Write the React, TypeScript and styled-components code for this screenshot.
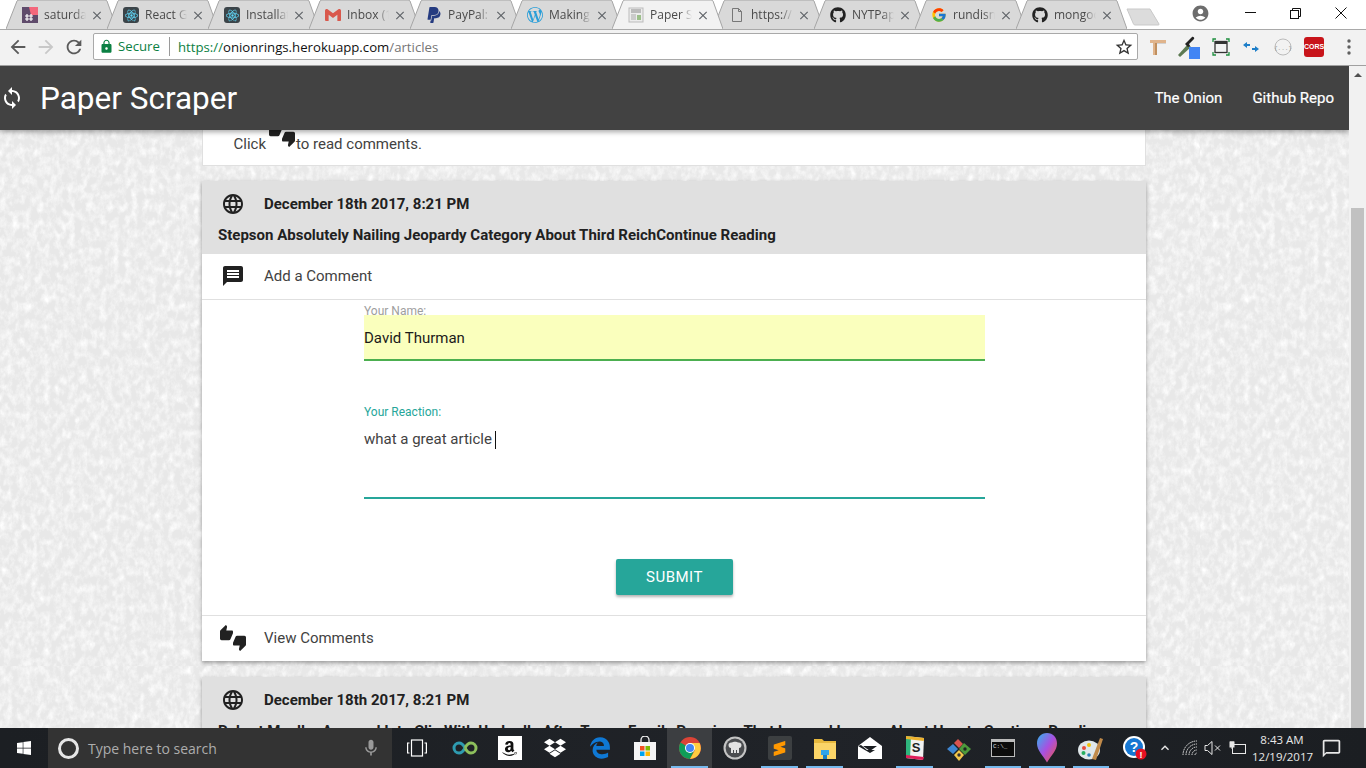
import React from 'react';
import styled, { createGlobalStyle } from 'styled-components';
import { MdLanguage, MdMessage, MdThumbsUpDown, MdSync, MdArrowBack, MdArrowForward, MdRefresh, MdLock, MdStarBorder, MdAccountCircle, MdMic, MdKeyboardArrowUp, MdOutlineChatBubbleOutline, MdClose } from 'react-icons/md';
import { FaGithub, FaWindows, FaAmazon, FaDropbox, FaEdgeLegacy } from 'react-icons/fa';
import { FcGoogle } from 'react-icons/fc';
import { SiGmail, SiPaypal, SiWordpress, SiReact, SiSublimetext } from 'react-icons/si';

const noise = `<svg xmlns='http://www.w3.org/2000/svg' width='600' height='600'><filter id='n'><feTurbulence type='fractalNoise' baseFrequency='0.16 0.11' numOctaves='5' seed='11' stitchTiles='stitch'/><feColorMatrix values='0 0 0 0 1  0 0 0 0 1  0 0 0 0 1  1.2 1.2 0 0 -0.98'/></filter><rect width='600' height='600' fill='#e8e8e8'/><rect width='600' height='600' filter='url(#n)'/></svg>`;
const noiseUrl = `url("data:image/svg+xml,${encodeURIComponent(noise)}")`;

const Global = createGlobalStyle`
  html, body { margin: 0; padding: 0; height: 100%; overflow: hidden; }
  body { font-family: Roboto, "Liberation Sans", sans-serif; color: #212121; }
  * { box-sizing: border-box; }
`;

const Screen = styled.div`
  width: 1366px; height: 768px; display: flex; flex-direction: column; overflow: hidden; background: #fff;
`;
const TabStrip = styled.div`
  height: 29px; flex: none; display: flex; align-items: stretch; padding-left: 6px; background: #fff; position: relative; z-index: 2;
`;
const TabBox = styled.div<{ $active?: boolean }>`
  position: relative; width: 111px; flex: none; margin-right: -10px; padding: 4px 0 0 16px; display: flex; align-items: flex-start;
  z-index: ${p => (p.$active ? 3 : 1)};
`;
const TabShape = styled.svg`
  position: absolute; left: 0; top: 0; width: 111px; height: 29px;
`;
const TabIcon = styled.span`
  position: relative; width: 16px; height: 16px; margin-top: 3px; display: flex; align-items: center; justify-content: center; flex: none; font-size: 16px;
`;
const TabTitle = styled.span`
  position: relative; width: 42px; margin-left: 6px; margin-top: 3px; font: 12px/16px "Open Sans", "Noto Sans", sans-serif; color: #4a4a4a; white-space: nowrap; overflow: hidden;
  -webkit-mask-image: linear-gradient(to right, #000 72%, transparent 100%);
  mask-image: linear-gradient(to right, #000 72%, transparent 100%);
`;
const TabClose = styled.span`
  position: relative; margin-left: 4px; margin-top: 3px; width: 14px; height: 16px; color: #5f6368; font-size: 15px; display: flex; align-items: center; justify-content: center;
`;
const NewTab = styled.svg`
  position: relative; width: 34px; height: 18px; margin: 8px 0 0 9px; flex: none;
`;
const WindowSpacer = styled.div`
  flex: 1; display: flex; justify-content: flex-end; align-items: center; padding: 3px 3px 6px 0;
`;
const Avatar = styled.span`
  color: #6d6d6d; font-size: 19px; display: flex; margin-right: 18px;
`;
const WinButton = styled.span`
  width: 45px; display: flex; justify-content: center; align-items: center; height: 20px; color: #111;
`;
const Toolbar = styled.div`
  height: 37px; flex: none; background: #f2f2f2; border-top: 1px solid #a9a9a9; border-bottom: 1px solid #a0a0a0; display: flex; align-items: center; padding: 0 0 2px 4px; position: relative; z-index: 1;
`;
const NavIcon = styled.span<{ $muted?: boolean; $w?: number }>`
  width: ${p => p.$w ?? 28}px; display: flex; justify-content: center; font-size: 22px; color: ${p => (p.$muted ? '#c8c8c8' : '#5a5a5a')};
`;
const Omnibox = styled.div`
  margin-left: 5px; width: 1045px; height: 27px; background: #fff; border: 1px solid #a9a9a9; border-radius: 2px; display: flex; align-items: center; padding-left: 5px; font: 13.2px "Open Sans", "Noto Sans", sans-serif;
`;
const LockIcon = styled.span`
  color: #0b8043; display: flex; font-size: 15px;
`;
const Secure = styled.span`
  color: #0b8043; margin-left: 4px; width: 52px; border-right: 1px solid #9a9a9a; line-height: 19px;
`;
const Url = styled.span`
  margin-left: 8px; color: #757575; flex: 1;
  b { font-weight: 400; color: #111; }
  i { font-style: normal; color: #0b8043; }
`;
const Star = styled.span`
  display: flex; font-size: 20px; color: #333; margin-right: 3px;
`;
const Extensions = styled.div`
  flex: 1; display: flex; align-items: center; padding-left: 8px;
`;
const Ext = styled.span<{ $w: number }>`
  width: ${p => p.$w}px; display: flex; justify-content: center; align-items: center; flex: none;
`;
const Cors = styled.span`
  width: 20px; height: 20px; background: #c8141a; border-radius: 3px; color: #fff; font: bold 7px "Liberation Sans", sans-serif; display: flex; align-items: center; justify-content: center;
`;
const Middle = styled.div`
  flex: 1; min-height: 0; display: flex;
`;
const PageArea = styled.div`
  flex: 1; min-width: 0; overflow: hidden; background-color: #ececec; background-image: ${noiseUrl}; display: flex; flex-direction: column;
`;
const Nav = styled.header`
  width: 100%; height: 64px; flex: none; background: #424242; color: #fff; display: flex; align-items: center; padding: 0 15px 0 0; box-shadow: 0 2px 5px rgba(0,0,0,.35); position: relative; z-index: 2;
`;
const Brand = styled.div`
  font-size: 31.5px; line-height: 60px; margin: 2px 0 0 16px; flex: 1;
`;
const BrandIcon = styled.span`
  display: flex; font-size: 24px;
`;
const NavLink = styled.a`
  font-size: 15px; font-weight: 400; margin-left: 30px; color: #fff; -webkit-text-stroke: 0.2px #fff;
`;
const Content = styled.main`
  padding-left: 202px; display: flex; flex-direction: column;
`;
const Hint = styled.section`
  width: 944px; height: 36px; flex: none; background: #fff; border: 1px solid #e0e0e0; border-top: 0; display: flex; align-items: flex-end; padding: 0 0 11px 30.5px; font-size: 15px; color: #424242; margin-bottom: 15px; line-height: 20px;
`;
const HintIcon = styled.span`
  display: flex; font-size: 26px; color: #212121; margin: 0 1px -5px 3px; height: 26px; position: relative; top: -12px;
`;
const Card = styled.article`
  width: 944px; flex: none; background: #fff; box-shadow: 0 2px 4px rgba(0,0,0,.35); margin-bottom: 16px;
`;
const CardHead = styled.div`
  background: #e0e0e0; padding: 10px 16px 0 16px; height: 73px;
`;
const HeadRow = styled.div`
  display: flex; align-items: center; height: 26px; font-size: 15px; font-weight: 700;
`;
const RowIcon = styled.span<{ $size?: number }>`
  width: 30px; margin: 0 16px 0 0; display: flex; justify-content: center; font-size: ${p => p.$size ?? 24}px; color: #212121; flex: none;
`;
const Headline = styled.div`
  font-size: 15px; font-weight: 700; margin-top: 8px; line-height: 20px; white-space: nowrap;
`;
const Row = styled.div<{ $border?: boolean }>`
  height: ${p => (p.$border ? 46 : 45)}px; display: flex; align-items: center; padding-left: 16px; font-size: 15px; color: #424242;
  padding-bottom: ${p => (p.$border ? 1 : 2)}px;
  ${p => p.$border && 'border-bottom: 1px solid #e0e0e0;'}
`;
const Form = styled.div`
  padding: 4px 161px 0 162px; height: 316px; border-bottom: 1px solid #e0e0e0; display: flex; flex-direction: column;
`;
const Label = styled.label<{ $focus?: boolean }>`
  font-size: 12px; line-height: 14px; display: block; color: ${p => (p.$focus ? '#26a69a' : '#9e9e9e')};
`;
const NameInput = styled.div`
  height: 46px; margin-top: -3px; background: #faffbd; border-bottom: 2px solid #4caf50; font-size: 15px; color: #1a1a1a; line-height: 46px;
`;
const ReactionLabel = styled(Label)`
  margin-top: 44px;
`;
const Reaction = styled.div`
  height: 80px; border-bottom: 2px solid #26a69a; font-size: 15px; color: #424242; padding-top: 10px; line-height: 20px; display: flex; align-items: flex-start;
`;
const Caret = styled.span`
  display: inline-block; width: 1px; height: 18px; background: #111; margin: 2px 0 0 3px;
`;
const Submit = styled.button`
  align-self: center; width: 117px; height: 36px; margin: 60px 0 0 0; background: #26a69a; color: #fff; border: 0; border-radius: 2px; font: 400 15px Roboto, sans-serif; letter-spacing: .5px; box-shadow: 0 2px 3px rgba(0,0,0,.3);
`;
const Scrollbar = styled.div`
  width: 17px; flex: none; background: #f1f1f1; padding: 0 2px; display: flex; flex-direction: column; align-items: center;
`;
const UpArrow = styled.span`
  width: 0; height: 0; border-left: 4px solid transparent; border-right: 4px solid transparent; border-bottom: 4px solid #505050; margin-top: 7px;
`;
const Thumb = styled.span`
  width: 13px; flex: 1; background: #c1c1c1; margin-top: 131px;
`;
const Taskbar = styled.footer`
  height: 40px; flex: none; display: flex; align-items: stretch; color: #fff; position: relative; z-index: 3;
  background: linear-gradient(to right, #1c1f23, #202328 60%, #1b1e22);
`;
const StartBtn = styled.div`
  width: 48px; display: flex; align-items: center; justify-content: center; font-size: 16px; flex: none;
`;
const Search = styled.div`
  width: 344px; flex: none; background: #333; display: flex; align-items: center; padding: 0 11px 0 10px; color: #adadad; font: 14px "Open Sans", "Noto Sans", sans-serif;
`;
const Cortana = styled.span`
  width: 21px; height: 21px; border: 3px solid #e6e6e6; border-radius: 50%; margin-right: 9px; flex: none;
`;
const SearchText = styled.span`
  flex: 1;
`;
const Apps = styled.div`
  display: flex; flex: none;
`;
const TaskViewSlot = styled.div`
  width: 50px; display: flex; align-items: center; justify-content: center; flex: none;
`;
const AppSlot = styled.div<{ $running?: boolean; $active?: boolean; $tight?: boolean }>`
  width: ${p => (p.$tight ? 44 : 45)}px; display: flex; align-items: center; justify-content: center; flex: none; position: relative; font-size: 22px;
  ${p => p.$active && 'background: #3c3e41;'}
  ${p => p.$running && `
    &::after { content: ''; position: absolute; bottom: 0; left: 4px; right: 4px; height: 2px; background: #76b9ed; }
  `}
`;
const Tray = styled.div`
  display: flex; align-items: center; flex: 1; color: #e8e8e8;
`;
const TrayIcon = styled.span<{ $w: number; $ml?: number }>`
  width: ${p => p.$w}px; margin-left: ${p => p.$ml ?? 0}px; flex: none; display: flex; justify-content: center; font-size: 18px;
`;
const Clock = styled.div`
  width: 60px; flex: none; text-align: center; font: 11.5px/17px "Open Sans", "Noto Sans", sans-serif; white-space: nowrap;
`;
const Notify = styled.span`
  margin-left: 9px; display: flex; font-size: 21px;
`;
const Sq = styled.span<{ $bg: string; $c?: string; $r?: number; $w?: number }>`
  width: ${p => p.$w ?? 24}px; height: ${p => p.$w ?? 24}px; background: ${p => p.$bg}; color: ${p => p.$c ?? '#fff'}; border-radius: ${p => p.$r ?? 0}px; display: flex; align-items: center; justify-content: center;
`;
const CmdBox = styled.span`
  width: 24px; height: 18px; background: #0c0c0c; border: 1px solid #bbb; border-top-width: 3px; color: #ddd; font: 6px/9px "Liberation Mono", monospace; padding-left: 1px;
`;

const ReactTabIcon = () => (
  <Sq $bg="#3b4449" $c="#61dafb" $r={3} $w={16} style={{ fontSize: 13 }}><SiReact /></Sq>
);
const SaturdayIcon = () => (
  <svg width="16" height="16" viewBox="0 0 16 16">
    <rect width="16" height="16" fill="#5f4b6b" />
    <path d="M7 0h9v8H9z" fill="#f4677c" />
    <path d="M5 7v7M9 7v7M3 9h8M3 12h8" stroke="#fff" strokeWidth="1.2" />
  </svg>
);
const PaperIcon = () => (
  <svg width="16" height="16" viewBox="0 0 16 16">
    <rect x="1" y="1" width="14" height="14" fill="#ececec" stroke="#bbb" />
    <path d="M3 3h10M3 5h10" stroke="#8a8a8a" />
    <path d="M3 8h5M3 10h5M3 12h5" stroke="#aaa" />
    <rect x="9" y="8" width="4" height="5" fill="#9cbf8a" />
  </svg>
);
const DocIcon = () => (
  <svg width="16" height="16" viewBox="0 0 16 16" fill="none" stroke="#777">
    <path d="M3.5 1.5h6l3 3v10h-9z" /><path d="M9.5 1.5v3h3" />
  </svg>
);

const tabs: { icon: React.ReactNode; title: string; active?: boolean }[] = [
  { icon: <SaturdayIcon />, title: 'saturday' },
  { icon: <ReactTabIcon />, title: 'React Gu' },
  { icon: <ReactTabIcon />, title: 'Installati' },
  { icon: <SiGmail color="#d9584c" />, title: 'Inbox (1' },
  { icon: <SiPaypal color="#253b80" />, title: 'PayPal: S' },
  { icon: <SiWordpress color="#2a9ed8" />, title: 'Making' },
  { icon: <PaperIcon />, title: 'Paper Sc', active: true },
  { icon: <DocIcon />, title: 'https://' },
  { icon: <FaGithub color="#222" />, title: 'NYTPape' },
  { icon: <FcGoogle />, title: 'rundisni' },
  { icon: <FaGithub color="#222" />, title: 'mongoo' },
];

const Tab = ({ icon, title, active }: { icon: React.ReactNode; title: string; active?: boolean }) => (
  <TabBox $active={active}>
    <TabShape viewBox="0 0 111 29">
      <path
        d="M0 29 L11 1 Q11.5 0 13 0 H99 Q100.5 0 101 1 L111 29"
        fill={active ? '#f2f2f2' : '#d9d9d9'}
        stroke="#a5a5a5"
      />
    </TabShape>
    <TabIcon>{icon}</TabIcon>
    <TabTitle>{title}</TabTitle>
    <TabClose><MdClose /></TabClose>
  </TabBox>
);

const ChromeLogo = () => (
  <svg width="24" height="24" viewBox="0 0 24 24">
    <circle cx="12" cy="12" r="11" fill="#db4437" />
    <path d="M12 12 L2.5 6.5 A11 11 0 0 0 12 23 L17.5 12z" fill="#0f9d58" />
    <path d="M12 7h9.6A11 11 0 0 1 12 23l5-9z" fill="#ffcd40" />
    <circle cx="12" cy="12" r="5" fill="#fff" /><circle cx="12" cy="12" r="4" fill="#4285f4" />
  </svg>
);
const InfinityIcon = () => (
  <svg width="26" height="14" viewBox="0 0 26 14" fill="none" strokeWidth="3">
    <path d="M13 7C11 3 9 2 7 2a5 5 0 0 0 0 10c2 0 4-1 6-5" stroke="#2e9bb0" />
    <path d="M13 7c2-4 4-5 6-5a5 5 0 0 1 0 10c-2 0-4-1-6-5" stroke="#8dbf5c" />
  </svg>
);
const TaskView = () => (
  <svg width="20" height="18" viewBox="0 0 20 18" fill="none" stroke="#fff" strokeWidth="1.2">
    <rect x="4.5" y="1" width="11" height="16" /><path d="M2.5 4H.6v10h1.9M17.5 4h1.9v10h-1.9" />
  </svg>
);
const StoreIcon = () => (
  <svg width="22" height="24" viewBox="0 0 22 24">
    <path d="M7 6V4a4 4 0 0 1 8 0v2" fill="none" stroke="#eee" strokeWidth="1.3" />
    <rect x="0" y="6" width="22" height="18" fill="#f5f5f5" />
    <rect x="6" y="10" width="4.5" height="4.5" fill="#f25022" /><rect x="11.5" y="10" width="4.5" height="4.5" fill="#7fba00" />
    <rect x="6" y="15.5" width="4.5" height="4.5" fill="#00a4ef" /><rect x="11.5" y="15.5" width="4.5" height="4.5" fill="#ffb900" />
  </svg>
);
const MendeleyIcon = () => (
  <svg width="24" height="24" viewBox="0 0 24 24">
    <circle cx="12" cy="12" r="11.5" fill="#c4c4c4" /><circle cx="12" cy="12" r="9.4" fill="#4a4c4f" />
    <path d="M5.500 9c0-2 2-3 3.500-2.400C9.700 5.500 14.300 5.500 15 6.600 16.500 6 18.500 7 18.500 9c0 2-1 3-2.500 3v5h-2v-3h-1v3h-2v-3h-1v3H8v-5c-1.500 0-2.500-1-2.500-3z" fill="#e2e2e2" />
  </svg>
);
const FolderIcon = () => (
  <svg width="22" height="22" viewBox="0 0 22 22">
    <path d="M0 2h8l2 2h12v4H0z" fill="#e8b93d" /><rect y="6" width="22" height="16" fill="#fbd568" />
    <rect x="7" y="13" width="8" height="5" fill="#31a4e8" /><rect x="9" y="18" width="4" height="4" fill="#1b7fc4" />
  </svg>
);
const MailIcon = () => (
  <svg width="24" height="22" viewBox="0 0 24 22">
    <path d="M0 9 12 0l12 9v13H0z" fill="#fff" /><path d="M0 9l12 7 5-3H9L3 8z" fill="#1c1f23" />
    <path d="M5 9h14l-7 5z" fill="#1c1f23" />
  </svg>
);
const SlackTile = () => (
  <svg width="20" height="26" viewBox="0 0 20 26">
    <path d="M1 1l18 2-1 22-17-2z" fill="#f2f2f2" />
    <path d="M1 1l5 .5L5 23.500 1 23z" fill="#2eb67d" /><path d="M1 20l18 2-1 3-17-2z" fill="#e01e5a" />
    <path d="M1 1l18 2-.2 3L1 4z" fill="#ecb22e" />
    <text x="11" y="17" textAnchor="middle" fontSize="13" fontWeight="700" fill="#222" fontFamily="Liberation Sans">S</text>
  </svg>
);
const GitDiamond = () => (
  <svg width="26" height="26" viewBox="0 0 26 26">
    <path d="M8 8 12 4l5 5-4 4z" fill="#d9534f" />
    <path d="M18 8l7 6-6 6-6-6z" fill="#4e9a3b" />
    <path d="M7 9l5 5-5 5-6-5z" fill="#3f86d1" />
    <path d="M13 15l5 5-5 6-5-6z" fill="#f3c64b" />
    <circle cx="13" cy="20" r="1.700" fill="#333" /><circle cx="19" cy="14" r="1.700" fill="#222" />
  </svg>
);
const PaintIcon = () => (
  <svg width="20" height="30" viewBox="0 0 20 30">
    <defs><linearGradient id="pnt" x1="0" y1="0" x2="1" y2="1"><stop offset="0" stopColor="#2fb5f0" /><stop offset=".5" stopColor="#a94fe0" /><stop offset="1" stopColor="#f05a3c" /></linearGradient></defs>
    <path d="M10 0c6 0 10 4.500 10 10.500 0 7-6 12-10 19C6 22.500 0 17.500 0 10.500 0 4.500 4 0 10 0z" fill="url(#pnt)" />
  </svg>
);
const PaletteIcon = () => (
  <svg width="26" height="26" viewBox="0 0 26 26">
    <ellipse cx="11" cy="15" rx="11" ry="9.500" fill="#dfe7ea" />
    <circle cx="6" cy="13" r="2" fill="#e74c3c" /><circle cx="11" cy="10" r="2" fill="#f1c40f" /><circle cx="5.500" cy="18" r="2" fill="#27ae60" /><circle cx="11" cy="20" r="1.800" fill="#2980b9" />
    <path d="M14 24 22 3l3 1-7 21z" fill="#c08a4a" />
  </svg>
);
const HelpIcon = () => (
  <svg width="24" height="24" viewBox="0 0 24 24">
    <circle cx="11" cy="11" r="11" fill="#fff" /><circle cx="11" cy="11" r="9" fill="#1677d2" />
    <text x="11" y="16" textAnchor="middle" fontSize="14" fontWeight="700" fill="#fff" fontFamily="Liberation Sans">?</text>
    <circle cx="18" cy="18" r="5.500" fill="#e81123" />
    <text x="18" y="21.500" textAnchor="middle" fontSize="9" fontWeight="700" fill="#fff" fontFamily="Liberation Sans">!</text>
  </svg>
);
const WifiIcon = () => (
  <svg width="16" height="16" viewBox="0 0 16 16" fill="none" stroke="#e8e8e8">
    <path d="M1 15A14 14 0 0 1 15 1M4 15A11 11 0 0 1 15 4M7 15a8 8 0 0 1 8-8M10 15a5 5 0 0 1 5-5M13 15a2 2 0 0 1 2-2" strokeDasharray="1.500 .8" />
  </svg>
);
const MutedIcon = () => (
  <svg width="17" height="16" viewBox="0 0 17 16" fill="none" stroke="#e8e8e8">
    <path d="M1 5.500h2.500L8 1.500v13l-4.500-4H1z" /><path d="M11 5.500l5 5M16 5.500l-5 5" />
  </svg>
);
const BatteryIcon = () => (
  <svg width="18" height="14" viewBox="0 0 18 14" fill="none" stroke="#e8e8e8">
    <rect x="4.500" y="3.500" width="13" height="9" /><rect x="2" y="1" width="4" height="5" fill="#e8e8e8" /><path d="M3 0v1M5 0v1M4 6v2" />
  </svg>
);
const EyeDropper = () => (
  <svg width="26" height="26" viewBox="0 0 26 26">
    <path d="M1 21 11 10l3 3L3 23z" fill="#5d7a52" />
    <path d="M10 8l5-5c1-1 3 1 2 2l-5 5 1 2-2 1-3-3z" fill="#222" />
    <rect x="12" y="13" width="11" height="12" fill="#4285f4" />
  </svg>
);
const WoodIcon = () => (
  <svg width="16" height="17" viewBox="0 0 16 17">
    <path d="M0 2h16v3H7v12H3V5H0z" fill="#e0b48c" /><path d="M5 5h2v12H5z" fill="#c08f5e" /><path d="M7 5h9v1H7z" fill="#d2d2d2" />
  </svg>
);
const Capture = () => (
  <svg width="18" height="18" viewBox="0 0 18 18" fill="none">
    <path d="M1 4V1h3M14 1h3v3M1 14v3h3M17 14v3h-3" stroke="#1e8e3e" strokeWidth="1.300" />
    <rect x="3" y="3.500" width="12" height="11" stroke="#333" strokeWidth="1.300" />
    <path d="M3 4h12v2H3z" fill="#333" />
  </svg>
);
const Arrows = () => (
  <svg width="16" height="10" viewBox="0 0 16 10" fill="#1e7fc9">
    <path d="M0 3l4-3v2h3v2H4v2zM16 7l-4-3v2H9v2h3v2z" />
  </svg>
);
const JsonIcon = () => (
  <svg width="18" height="18" viewBox="0 0 18 18" fill="none" stroke="#bbb">
    <circle cx="9" cy="9" r="8" /><text x="9" y="11.500" textAnchor="middle" fontSize="6" fill="#999" stroke="none" fontFamily="Liberation Mono">{'{...}'}</text>
  </svg>
);
const Dots = () => (
  <svg width="4" height="16" viewBox="0 0 4 16" fill="#5f5f5f">
    <circle cx="2" cy="2" r="1.700" /><circle cx="2" cy="8" r="1.700" /><circle cx="2" cy="14" r="1.700" />
  </svg>
);
const MinIcon = () => <svg width="11" height="2"><rect width="11" height="1" fill="#111" /></svg>;
const MaxIcon = () => (
  <svg width="11" height="11" fill="none" stroke="#111"><rect x=".5" y="2.500" width="8" height="8" /><path d="M2.500 2.500v-2h8v8h-2" /></svg>
);
const CloseIcon = () => (
  <svg width="12" height="12" fill="none" stroke="#111"><path d="M.5.500l11 11M11.500.500l-11 11" /></svg>
);

export default function App() {
  return (
    <Screen>
      <Global />
      <TabStrip>
        {tabs.map(t => <Tab key={t.title} icon={t.icon} title={t.title} active={t.active} />)}
        <NewTab viewBox="0 0 34 18"><path d="M1 1h23l9 15q.5 1-1 1H9q-1 0-1.500-1z" fill="#dcdcdc" stroke="#c9c9c9" /></NewTab>
        <WindowSpacer>
          <Avatar><MdAccountCircle /></Avatar>
          <WinButton><MinIcon /></WinButton>
          <WinButton><MaxIcon /></WinButton>
          <WinButton><CloseIcon /></WinButton>
        </WindowSpacer>
      </TabStrip>
      <Toolbar>
        <NavIcon><MdArrowBack /></NavIcon>
        <NavIcon $muted><MdArrowForward /></NavIcon>
        <NavIcon><MdRefresh /></NavIcon>
        <Omnibox>
          <LockIcon><MdLock /></LockIcon>
          <Secure>Secure</Secure>
          <Url><i>https://</i><b>onionrings.herokuapp.com</b>/articles</Url>
          <Star><MdStarBorder /></Star>
        </Omnibox>
        <Extensions>
          <Ext $w={24}><WoodIcon /></Ext>
          <Ext $w={40}><EyeDropper /></Ext>
          <Ext $w={22}><Capture /></Ext>
          <Ext $w={38}><Arrows /></Ext>
          <Ext $w={26}><JsonIcon /></Ext>
          <Ext $w={36}><Cors>CORS</Cors></Ext>
          <Ext $w={34}><Dots /></Ext>
        </Extensions>
      </Toolbar>
      <Middle>
        <PageArea>
          <Nav>
            <BrandIcon><MdSync /></BrandIcon>
            <Brand>Paper Scraper</Brand>
            <NavLink>The Onion</NavLink>
            <NavLink>Github Repo</NavLink>
          </Nav>
          <Content>
            <Hint>
              Click<HintIcon><MdThumbsUpDown /></HintIcon>to read comments.
            </Hint>
            <Card>
              <CardHead>
                <HeadRow><RowIcon><MdLanguage /></RowIcon>December 18th 2017, 8:21 PM</HeadRow>
                <Headline>Stepson Absolutely Nailing Jeopardy Category About Third ReichContinue Reading</Headline>
              </CardHead>
              <Row $border><RowIcon><MdMessage /></RowIcon>Add a Comment</Row>
              <Form>
                <Label>Your Name:</Label>
                <NameInput>David Thurman</NameInput>
                <ReactionLabel $focus>Your Reaction:</ReactionLabel>
                <Reaction>what a great article<Caret /></Reaction>
                <Submit>SUBMIT</Submit>
              </Form>
              <Row><RowIcon $size={26}><MdThumbsUpDown /></RowIcon>View Comments</Row>
            </Card>
            <Card>
              <CardHead>
                <HeadRow><RowIcon><MdLanguage /></RowIcon>December 18th 2017, 8:21 PM</HeadRow>
                <Headline>Robert Mueller Accused Into Clip With Umbrella After Trump Family Promises That Learned Lesson About How to Continue Reading</Headline>
              </CardHead>
            </Card>
          </Content>
        </PageArea>
        <Scrollbar>
          <UpArrow />
          <Thumb />
        </Scrollbar>
      </Middle>
      <Taskbar>
        <StartBtn><FaWindows /></StartBtn>
        <Search>
          <Cortana />
          <SearchText>Type here to search</SearchText>
          <MdMic size={20} color="#9a9a9a" />
        </Search>
        <Apps>
          <TaskViewSlot><TaskView /></TaskViewSlot>
          <AppSlot><InfinityIcon /></AppSlot>
          <AppSlot><Sq $bg="#fff" $c="#111"><FaAmazon size={17} /></Sq></AppSlot>
          <AppSlot><FaDropbox color="#fff" /></AppSlot>
          <AppSlot><FaEdgeLegacy color="#0f78d4" size={22} /></AppSlot>
          <AppSlot><StoreIcon /></AppSlot>
          <AppSlot $running $active><ChromeLogo /></AppSlot>
          <AppSlot><MendeleyIcon /></AppSlot>
          <AppSlot $running><Sq $bg="#3c3f41" $c="#ff9800" $r={2}><SiSublimetext size={15} /></Sq></AppSlot>
          <AppSlot $running><FolderIcon /></AppSlot>
          <AppSlot><MailIcon /></AppSlot>
          <AppSlot $running><SlackTile /></AppSlot>
          <AppSlot $tight><GitDiamond /></AppSlot>
          <AppSlot $tight $running><CmdBox>C:\_</CmdBox></AppSlot>
          <AppSlot $tight $running><PaintIcon /></AppSlot>
          <AppSlot $tight $running><PaletteIcon /></AppSlot>
          <AppSlot $tight><HelpIcon /></AppSlot>
        </Apps>
        <Tray>
          <TrayIcon $w={16}><MdKeyboardArrowUp size={26} /></TrayIcon>
          <TrayIcon $w={24} $ml={5}><WifiIcon /></TrayIcon>
          <TrayIcon $w={20}><MutedIcon /></TrayIcon>
          <TrayIcon $w={30}><BatteryIcon /></TrayIcon>
          <Clock>8:43 AM<br />12/19/2017</Clock>
          <Notify><MdOutlineChatBubbleOutline /></Notify>
        </Tray>
      </Taskbar>
    </Screen>
  );
}
